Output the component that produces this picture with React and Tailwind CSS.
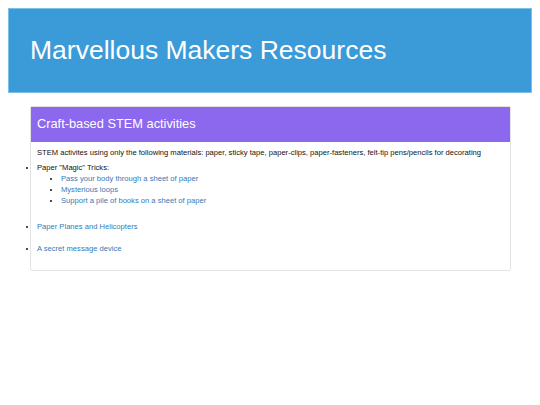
import React from "react";

const tricks = [
  "Pass your body through a sheet of paper",
  "Mysterious loops",
  "Support a pile of books on a sheet of paper",
];

export default function App() {
  return (
    <div
      className="min-h-screen bg-white pt-2 pl-2"
      style={{ fontFamily: '"Liberation Sans", Arial, sans-serif' }}
    >
      <div className="w-[524px] h-[85px] bg-[#3a9bd8] border border-[#7cc0ea] flex items-center pl-[21px]">
        <h1 className="text-white text-[26.5px] leading-none">Marvellous Makers Resources</h1>
      </div>

      <div className="ml-[22px] mt-[13px] w-[481px] border border-[#e3e3e3] rounded-[2px] bg-white">
        <div className="h-[35px] bg-[#8b68ee] flex items-center px-[6px]">
          <h2 className="text-white text-[12.8px] leading-none">Craft-based STEM activities</h2>
        </div>
        <div className="text-[7.6px] leading-[11px] text-[#111] pb-[16px]">
          <p className="pl-[6px] pt-[5px]">
            STEM activites using only the following materials: paper, sticky tape, paper-clips, paper-fasteners, felt-tip pens/pencils for decorating
          </p>
          <ul className="list-disc pl-[6px] mt-[4px]">
            <li>
              Paper "Magic" Tricks:
              <ul className="list-disc pl-[24px]">
                {tricks.map((t) => (
                  <li key={t}>
                    <a className="text-[#337ab7]">{t}</a>
                  </li>
                ))}
              </ul>
            </li>
            <li className="mt-[15px]">
              <a className="text-[#337ab7]">Paper Planes and Helicopters</a>
            </li>
            <li className="mt-[11px]">
              <a className="text-[#337ab7]">A secret message device</a>
            </li>
          </ul>
        </div>
      </div>
    </div>
  );
}
